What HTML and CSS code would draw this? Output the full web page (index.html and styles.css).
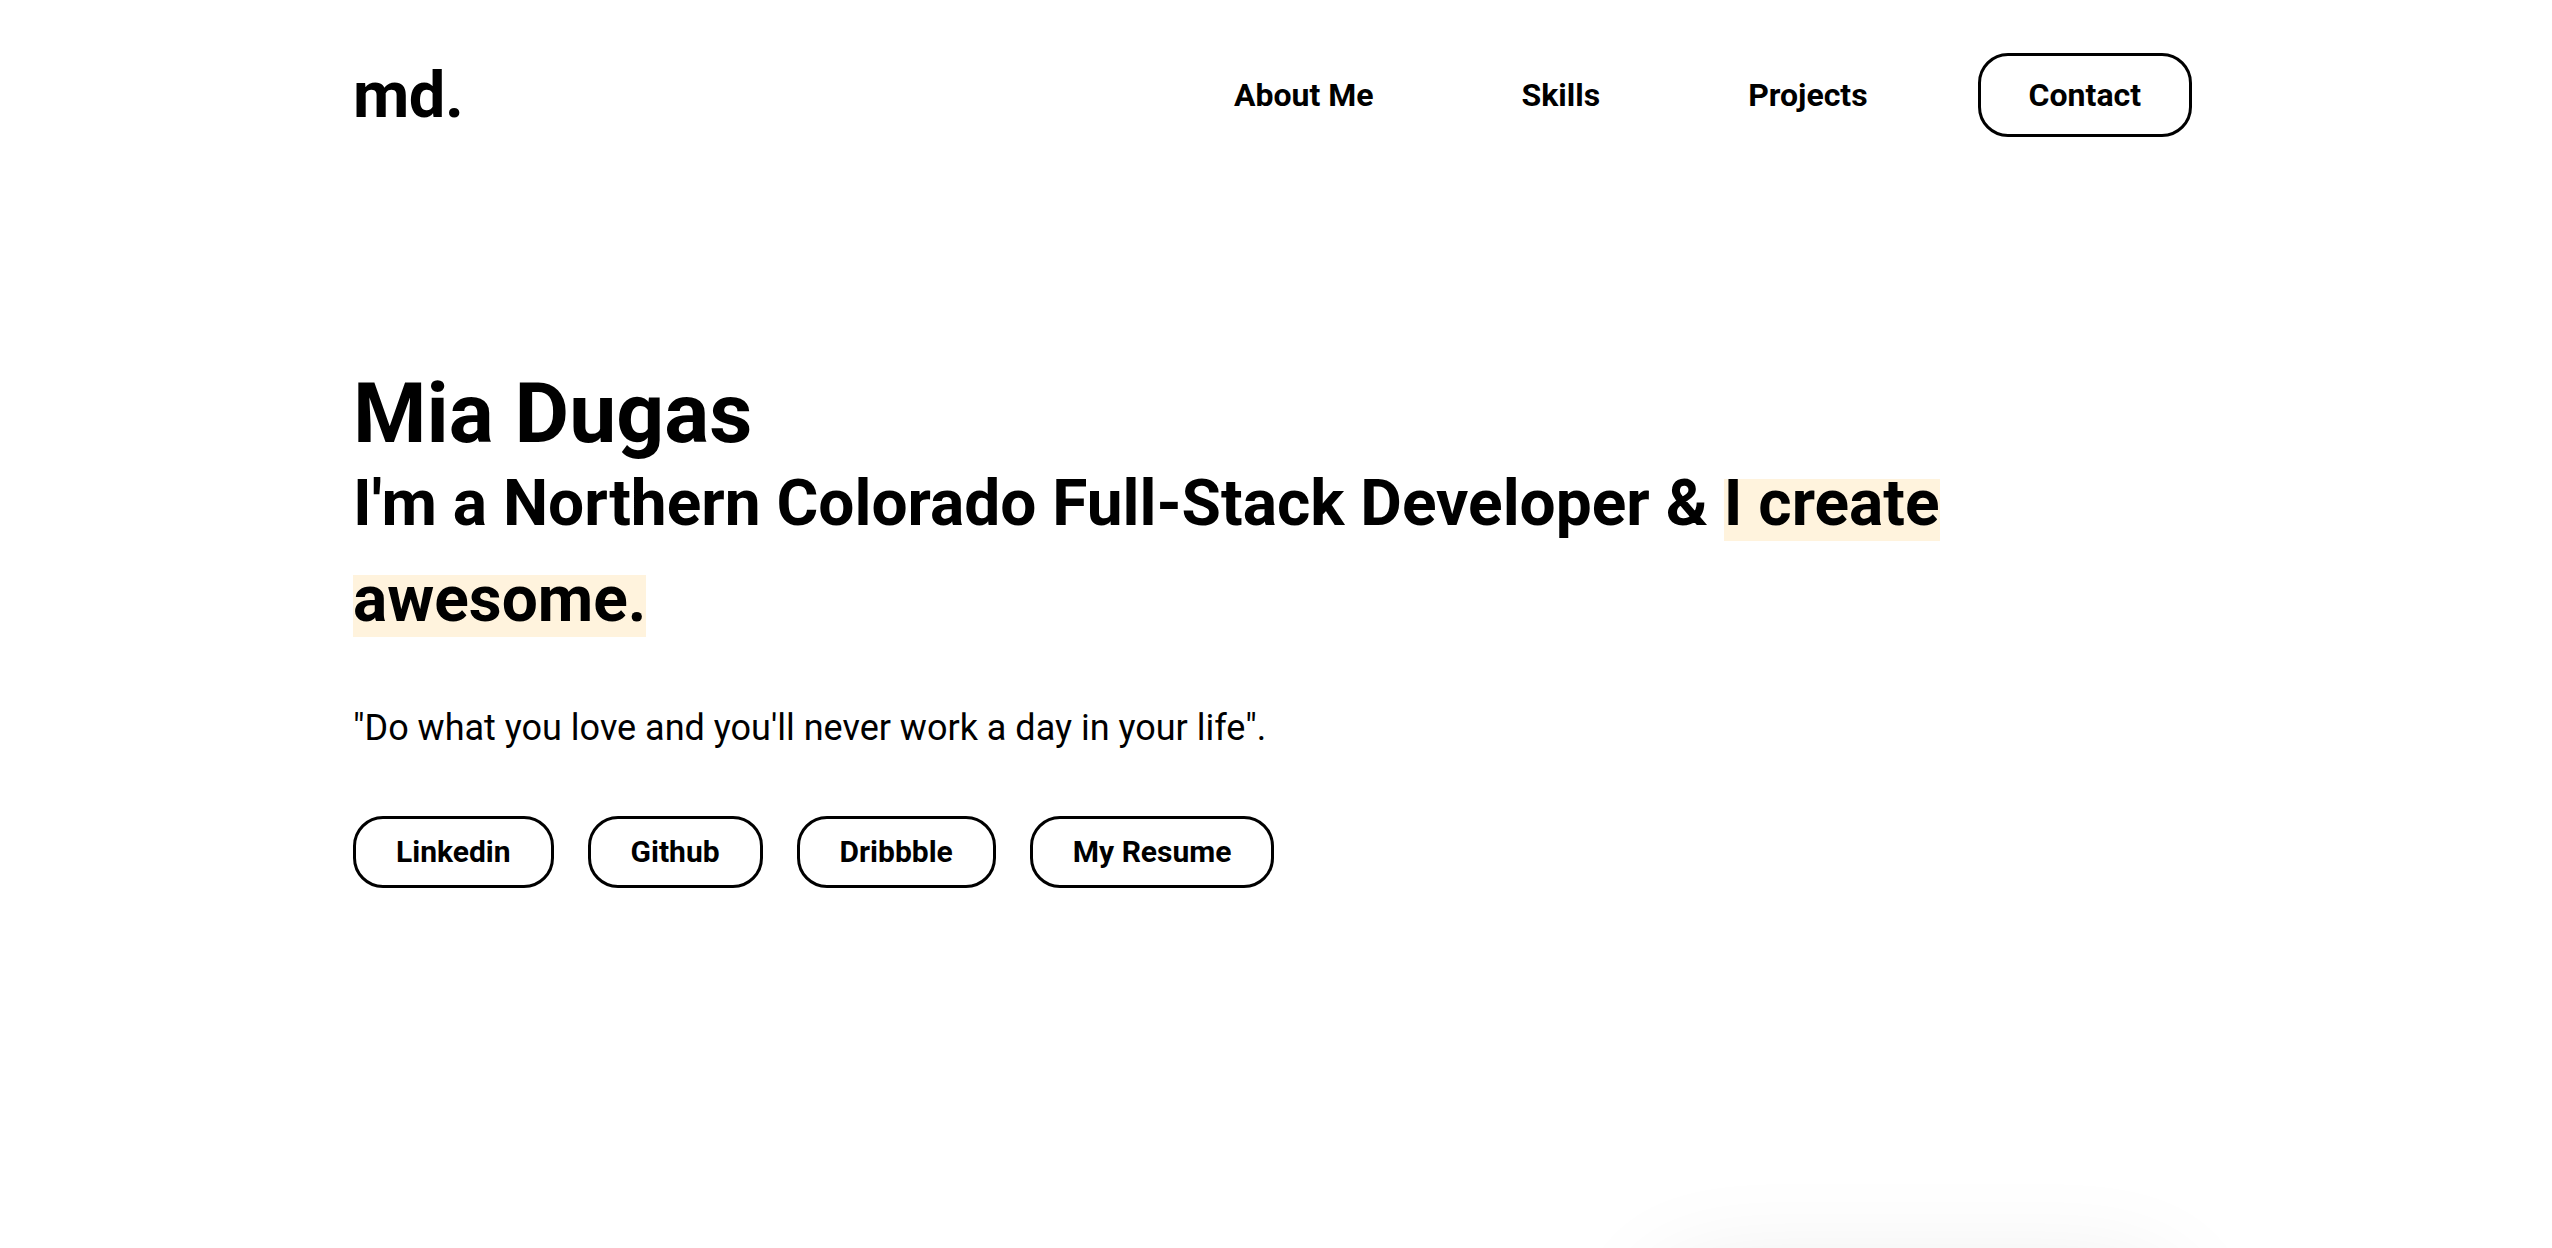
FILE: index.html
```html
<!DOCTYPE html>
<html lang="en">
<head>
<meta charset="utf-8">
<title>Mia Dugas</title>
<link rel="stylesheet" href="styles.css">
</head>
<body>
<div class="page">
  <header class="header">
    <a class="logo" href="#">md.</a>
    <nav class="nav">
      <a class="nav-link" href="#about">About Me</a>
      <a class="nav-link" href="#skills">Skills</a>
      <a class="nav-link" href="#projects">Projects</a>
      <a class="nav-contact" href="#contact">Contact</a>
    </nav>
  </header>
  <section class="hero">
    <h1 class="hero-name">Mia Dugas</h1>
    <h2 class="hero-title">I'm a Northern Colorado Full-Stack Developer &amp; <span class="hl">I create</span> <span class="hl">awesome.</span></h2>
    <p class="hero-quote">"Do what you love and you'll never work a day in your life".</p>
    <div class="hero-links">
      <a class="pill" href="#">Linkedin</a>
      <a class="pill" href="#">Github</a>
      <a class="pill" href="#">Dribbble</a>
      <a class="pill" href="#">My Resume</a>
    </div>
  </section>
  <section class="about">
    <div class="about-card"></div>
  </section>
</div>
</body>
</html>
```
FILE: styles.css
```css
html, body {
  margin: 0;
  padding: 0;
  background: #fff;
  color: #000;
  font-family: Roboto, "Noto Sans", Arial, sans-serif;
}
a { color: inherit; text-decoration: none; }

.page {
  margin: 0 360px 0 353px;
}

.header {
  display: flex;
  align-items: center;
  justify-content: space-between;
  padding-top: 53px;
}
.logo {
  font-size: 65px;
  font-weight: 700;
  line-height: 1;
  letter-spacing: -0.5px;
}
.nav {
  display: flex;
  align-items: center;
}
.nav-link, .nav-contact {
  font-size: 32px;
  font-weight: 700;
  line-height: 38px;
}
.nav-link {
  padding: 0 74px;
}
.nav-link:first-child { padding-left: 0; }
.nav-contact {
  margin-left: 36px;
  padding: 20px 48px;
  border: 3px solid #000;
  border-radius: 30px;
}

.hero {
  padding-top: 235px;
}
.hero-name {
  margin: 0;
  font-size: 84px;
  font-weight: 700;
  line-height: 1;
}
.hero-title {
  margin: 0;
  font-size: 64px;
  font-weight: 700;
  line-height: 96px;
}
.hl {
  background-image: linear-gradient(to bottom,
    transparent 0, transparent 13px,
    #fff3dd 13px, #fff3dd 75px,
    transparent 75px);
}
.hero-quote {
  margin: 53px 0 0;
  font-size: 36px;
  font-weight: 400;
  line-height: 1.5;
}
.hero-links {
  display: flex;
  gap: 34px;
  margin-top: 61px;
}
.pill {
  font-size: 30px;
  font-weight: 700;
  line-height: 36px;
  padding: 15px 40px;
  border: 3px solid #000;
  border-radius: 30px;
}

.about {
  display: flex;
  justify-content: flex-end;
  margin-top: 390px;
}
.about-card {
  width: 510px;
  height: 500px;
  margin-right: 22px;
  border-radius: 40px;
  background: #fff;
  box-shadow: 0 0 110px rgba(0, 0, 0, 0.1);
}
```
